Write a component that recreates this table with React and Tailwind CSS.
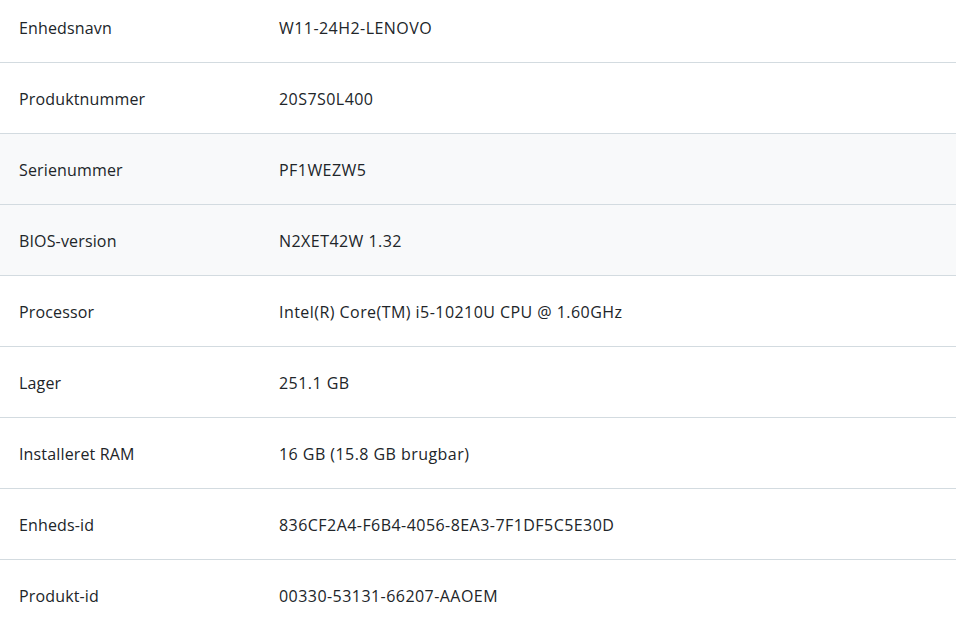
import React from 'react';
import clsx from 'clsx';

const rows = [
  { label: 'Enhedsnavn', value: 'W11-24H2-LENOVO' },
  { label: 'Produktnummer', value: '20S7S0L400' },
  { label: 'Serienummer', value: 'PF1WEZW5', shaded: true },
  { label: 'BIOS-version', value: 'N2XET42W 1.32', shaded: true },
  { label: 'Processor', value: 'Intel(R) Core(TM) i5-10210U CPU @ 1.60GHz' },
  { label: 'Lager', value: '251.1 GB' },
  { label: 'Installeret RAM', value: '16 GB (15.8 GB brugbar)' },
  { label: 'Enheds-id', value: '836CF2A4-F6B4-4056-8EA3-7F1DF5C5E30D' },
  { label: 'Produkt-id', value: '00330-53131-66207-AAOEM' },
];

const App = () => {
  return (
    <div className="w-[956px] h-[628px] overflow-hidden bg-white">
      {/* Device specs table */}
      <div
        className="-mt-[8px] text-[16px] text-[#212529]"
        style={{ fontFamily: '"Segoe UI", "Open Sans", "Noto Sans", sans-serif' }}
      >
        {rows.map((row) => (
          <div
            key={row.label}
            className={clsx(
              'h-[71px] pt-[2px] flex items-center border-b border-[#d3dbe0]',
              row.shaded ? 'bg-[#f8f9fa]' : 'bg-white'
            )}
          >
            <div className="w-[279px] pl-[19px] shrink-0 tracking-[0.15px]">{row.label}</div>
            <div className="tracking-[0.45px]">{row.value}</div>
          </div>
        ))}
      </div>
    </div>
  );
};

export default App;
